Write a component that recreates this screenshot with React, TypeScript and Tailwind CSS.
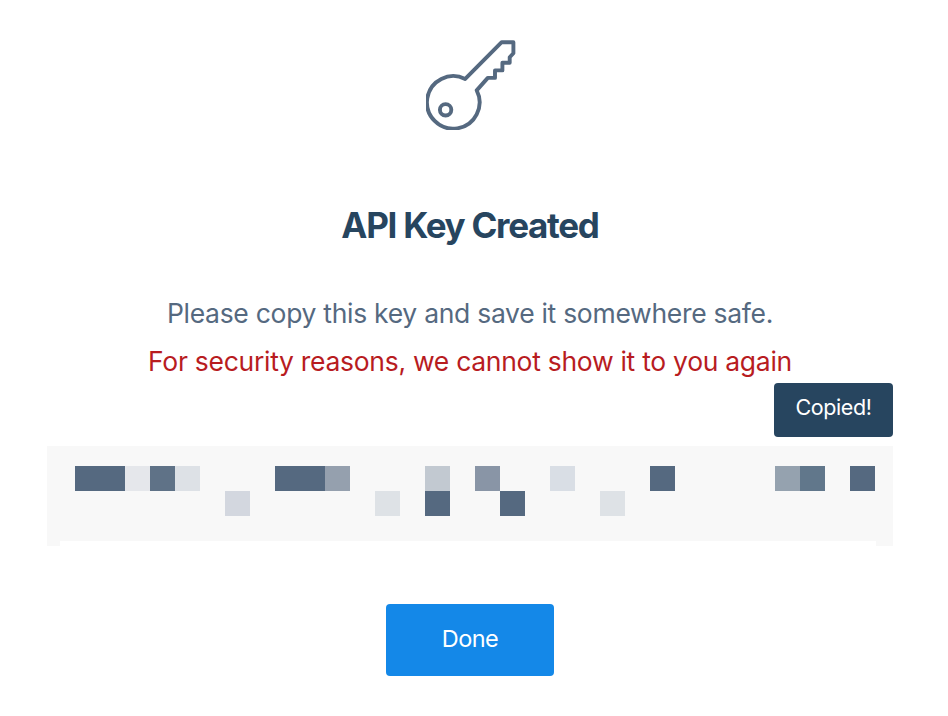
const rows: string[][] = [
  [
    "bg-[#556980]", "bg-[#556980]", "bg-[#e5e7eb]", "bg-[#5f7287]", "bg-[#dde1e6]", "", "", "",
    "bg-[#556980]", "bg-[#556980]", "bg-[#95a0ae]", "", "", "", "bg-[#c2c9d1]", "",
    "bg-[#8995a6]", "", "", "bg-[#d9dee5]", "", "", "", "bg-[#556980]",
    "", "", "", "", "bg-[#95a2af]", "bg-[#61778b]", "", "bg-[#556980]",
  ],
  [
    "", "", "", "", "", "", "bg-[#d3d7df]", "",
    "", "", "", "", "bg-[#dee2e6]", "", "bg-[#556980]", "",
    "", "bg-[#556980]", "", "", "", "bg-[#dee2e6]", "", "",
    "", "", "", "", "", "", "", "",
  ],
];

function KeyIcon() {
  return (
    <svg className="ml-[2px] block h-[90px] w-[90px]" viewBox="0 0 90 90" fill="none" stroke="#556980" strokeWidth="3.9" strokeLinejoin="round">
      <path d="M39.2 38.9 75.7 2.2H87.4V13.3L83.7 17.3V22.8H76.4V30.4H69V37.9H61.8L50.7 50.4A26.3 26.3 0 1 1 39.2 38.9Z" />
      <circle cx="19.6" cy="69.8" r="5.7" />
    </svg>
  );
}

function RedactedKey() {
  return (
    <div className="flex h-[100px] w-full flex-col justify-between bg-[#f8f8f8] pt-5">
      <div className="pl-7">
        {rows.map((row, i) => (
          <div key={i} className="flex">
            {row.map((color, j) => (
              <div key={j} className={`h-[25px] w-[25px] ${color}`} />
            ))}
          </div>
        ))}
      </div>
      <div className="ml-[13px] h-[5px] w-[816px] bg-white" />
    </div>
  );
}

export default function App() {
  return (
    <main className="h-[716px] w-[948px] overflow-hidden bg-white pl-[47px] pt-10 font-['Inter',sans-serif]">
      <div className="flex w-[846px] flex-col items-center whitespace-nowrap">
        <KeyIcon />
        <h1 className="mt-[70px] text-[35px] leading-[50px] font-bold tracking-[-1.28px] text-[#27455f]">API Key Created</h1>
        <p className="mt-[39px] text-[26.5px] leading-[48px] tracking-[-0.29px] text-[#556980]">Please copy this key and save it somewhere safe.</p>
        <p className="text-[26.5px] leading-[48px] tracking-[-0.29px] text-[#b81c1f]">For security reasons, we cannot show it to you again</p>
        <div className="mt-[-2px] flex h-[54px] w-[119px] justify-center self-end rounded-[4px] bg-[#27455f] pt-[8px] text-[21.5px] leading-8 tracking-[-0.4px] text-white">
          Copied!
        </div>
        <div className="mt-[9px] w-full">
          <RedactedKey />
        </div>
        <button className="mt-[58px] h-[72px] w-[168px] rounded-[4px] bg-[#1488e8] pb-[2px] text-[23.5px] leading-8 tracking-[-0.5px] text-white">Done</button>
      </div>
    </main>
  );
}
